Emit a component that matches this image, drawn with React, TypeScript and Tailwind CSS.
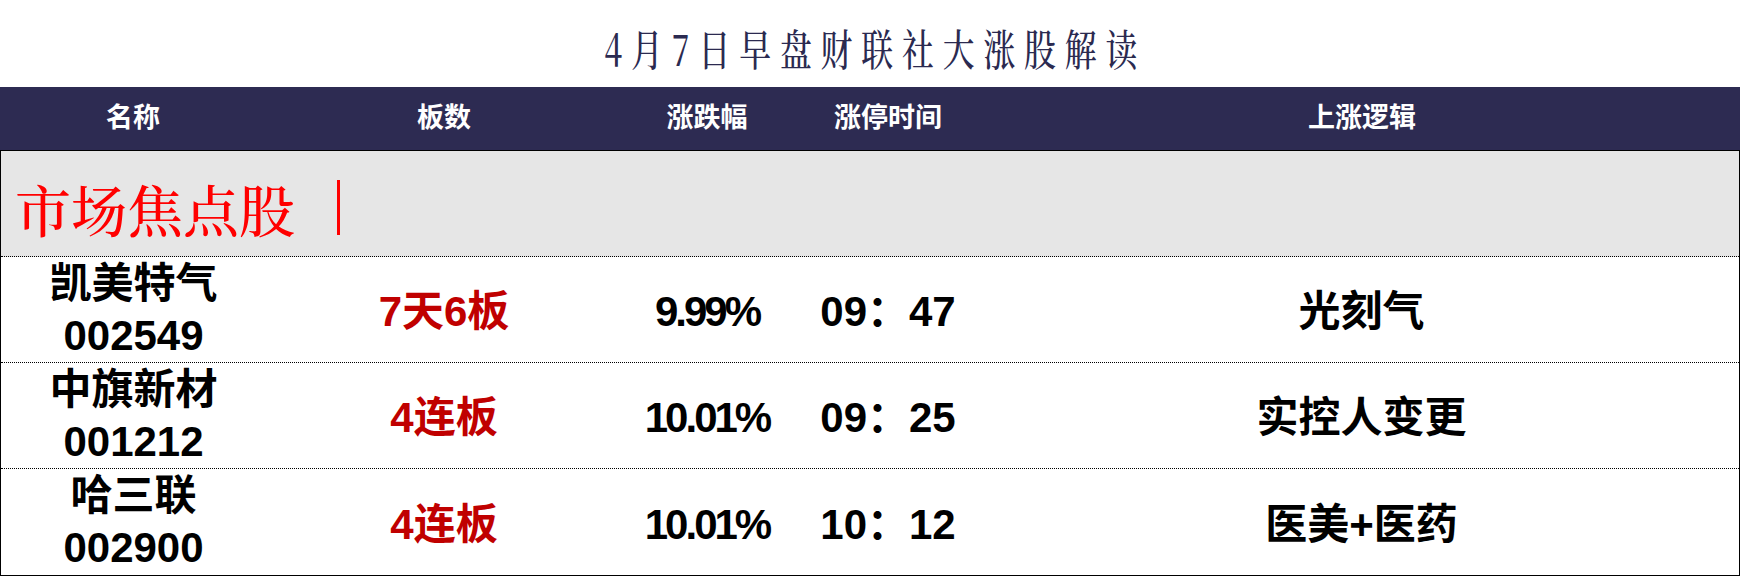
import React from 'react';

type Row = {
    name: string
    code: string
    board: string
    change: string
    time: string
    logic: string
}

const rows: Row[] = [
    { name: '凯美特气', code: '002549', board: '7天6板', change: '9.99%', time: '09：47', logic: '光刻气' },
    { name: '中旗新材', code: '001212', board: '4连板', change: '10.01%', time: '09：25', logic: '实控人变更' },
    { name: '哈三联', code: '002900', board: '4连板', change: '10.01%', time: '10：12', logic: '医美+医药' },
]

const headers = ['名称', '板数', '涨跌幅', '涨停时间', '上涨逻辑']

const sans = "font-['Liberation_Sans','Noto_Sans_CJK_SC',sans-serif]"
const serif = "font-['Noto_Serif_CJK_SC','Liberation_Serif','Noto_Sans_CJK_SC',serif]"

const App = () => {
    return (
        <div className="w-[1740px] h-[576px] bg-white flex flex-col">
            {/* title */}
            <div className="h-[88px] flex items-center justify-center pt-[8px] pl-[10px]">
                <h1 className={`${serif} text-[43px] leading-none tracking-[12px] scale-x-[0.74] text-[#2b2a50] font-medium whitespace-nowrap`}>
                    4月7日早盘财联社大涨股解读
                </h1>
            </div>

            {/* table header */}
            <div className={`${sans} h-[64px] bg-[#2d2b52] border-b border-black grid grid-cols-[266px_356px_170px_192px_1fr] text-white font-bold text-[27px]`}>
                {headers.map((h) => (
                    <div key={h} className="flex items-center justify-center">{h}</div>
                ))}
            </div>

            <div className="flex-1 flex flex-col border-l border-r border-b border-black">
                {/* section label */}
                <div className="h-[106px] bg-[#e6e6e6] border-b border-dotted border-black flex items-center pl-[14px] pt-[8px]">
                    <span className={`${serif} text-[56px] leading-none text-[#ff0000] font-medium`}>市场焦点股</span>
                    <span className="ml-[42px] w-[3px] h-[55px] bg-[#ff0000]"></span>
                </div>

                {rows.map((r, i) => (
                    <div
                        key={r.code}
                        className={`${sans} h-[106px] grid grid-cols-[265px_356px_170px_192px_1fr] font-bold text-black text-[42px] ${i < rows.length - 1 ? 'border-b border-dotted border-black' : ''}`}
                    >
                        <div className="flex flex-col items-center justify-center leading-[52px]">
                            <span>{r.name}</span>
                            <span>{r.code}</span>
                        </div>
                        <div className="flex items-center justify-center text-[#c00000] pt-[4px]">{r.board}</div>
                        <div className="flex items-center justify-center tracking-[-3px] pt-[4px]">{r.change}</div>
                        <div className="flex items-center justify-center pt-[4px]">{r.time}</div>
                        <div className="flex items-center justify-center pt-[4px]">{r.logic}</div>
                    </div>
                ))}
            </div>
        </div>
    );
}

export default App;
